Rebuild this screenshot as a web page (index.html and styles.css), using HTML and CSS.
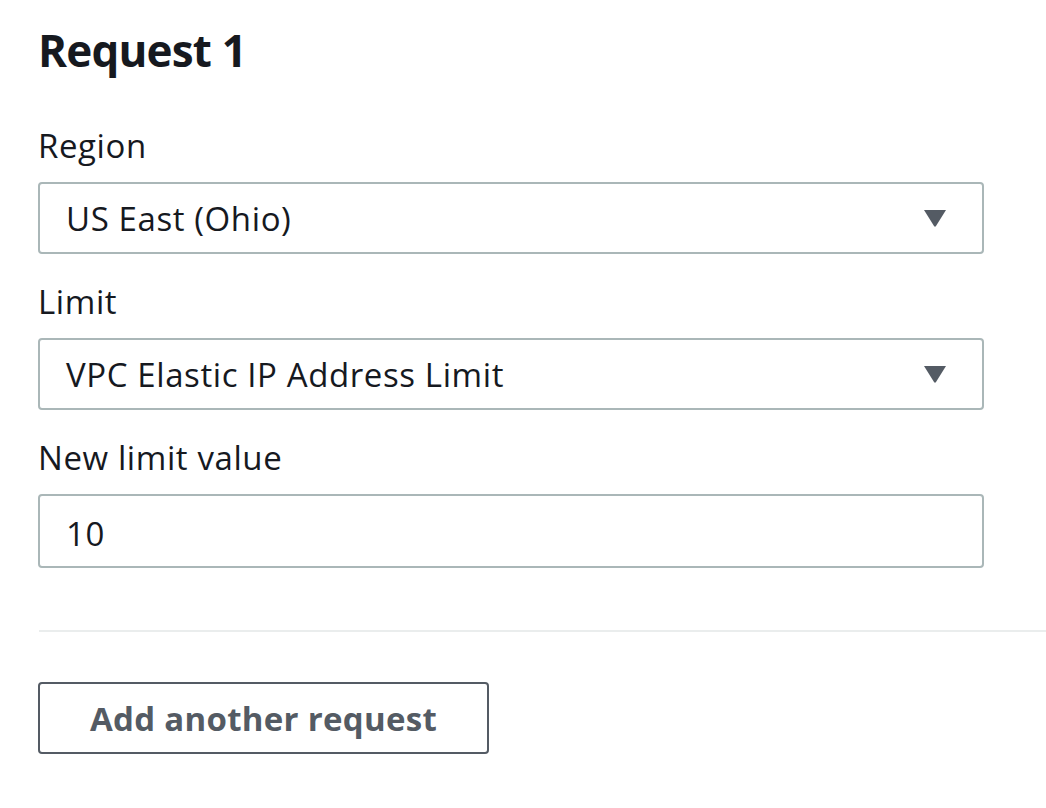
FILE: index.html
```html
<!DOCTYPE html>
<html lang="en">
<head>
<meta charset="utf-8">
<title>Request</title>
<link rel="stylesheet" href="styles.css">
</head>
<body>
<main class="page">
  <section class="request">
    <h2 class="request-title">Request 1</h2>
    <div class="field">
      <label class="field-label">Region</label>
      <div class="select">
        <span class="select-value">US East (Ohio)</span>
        <svg class="caret" viewBox="0 0 26 20" width="26" height="20" aria-hidden="true"><path d="M2 2 H24 L14 18 Q13 19.5 12 18 Z" fill="#545b64"/></svg>
      </div>
    </div>
    <div class="field">
      <label class="field-label">Limit</label>
      <div class="select">
        <span class="select-value">VPC Elastic IP Address Limit</span>
        <svg class="caret" viewBox="0 0 26 20" width="26" height="20" aria-hidden="true"><path d="M2 2 H24 L14 18 Q13 19.5 12 18 Z" fill="#545b64"/></svg>
      </div>
    </div>
    <div class="field">
      <label class="field-label">New limit value</label>
      <div class="input"><span class="input-value">10</span></div>
    </div>
  </section>
  <hr class="divider">
  <div class="actions">
    <button class="btn" type="button">Add another request</button>
  </div>
</main>
</body>
</html>
```
FILE: styles.css
```css
html, body {
  margin: 0;
  padding: 0;
  background: #ffffff;
}
body {
  font-family: "Open Sans", Roboto, sans-serif;
  color: #16191f;
}
.page {
  display: flex;
  flex-direction: column;
}
.request {
  display: flex;
  flex-direction: column;
  padding: 22px 0 0 38px;
  width: 946px;
}
.request-title {
  margin: 0 0 48px;
  font-size: 44px;
  line-height: 56px;
  font-weight: 700;
  letter-spacing: -0.8px;
}
.field {
  display: flex;
  flex-direction: column;
  margin-bottom: 28px;
}
.field:last-child {
  margin-bottom: 0;
}
.field-label {
  font-size: 33px;
  line-height: 40px;
  letter-spacing: 0.6px;
  margin-bottom: 16px;
}
.select, .input {
  box-sizing: border-box;
  height: 72px;
  border: 2px solid #aab7b8;
  border-radius: 4px;
  display: flex;
  align-items: center;
  justify-content: space-between;
  padding: 0 34px 0 26px;
  font-size: 33px;
  letter-spacing: 0.6px;
}
.input {
  height: 74px;
  padding-top: 5px;
}
.caret {
  display: block;
}
.divider {
  margin: 62px 0 0 39px;
  border: 0;
  border-top: 2px solid #eaeded;
  height: 0;
}
.actions {
  padding: 50px 0 0 38px;
}
.btn {
  box-sizing: border-box;
  width: 451px;
  height: 72px;
  border: 2px solid #545b64;
  border-radius: 4px;
  background: #fff;
  color: #545b64;
  font-family: inherit;
  font-size: 33px;
  font-weight: 700;
  letter-spacing: 0.3px;
}
```
